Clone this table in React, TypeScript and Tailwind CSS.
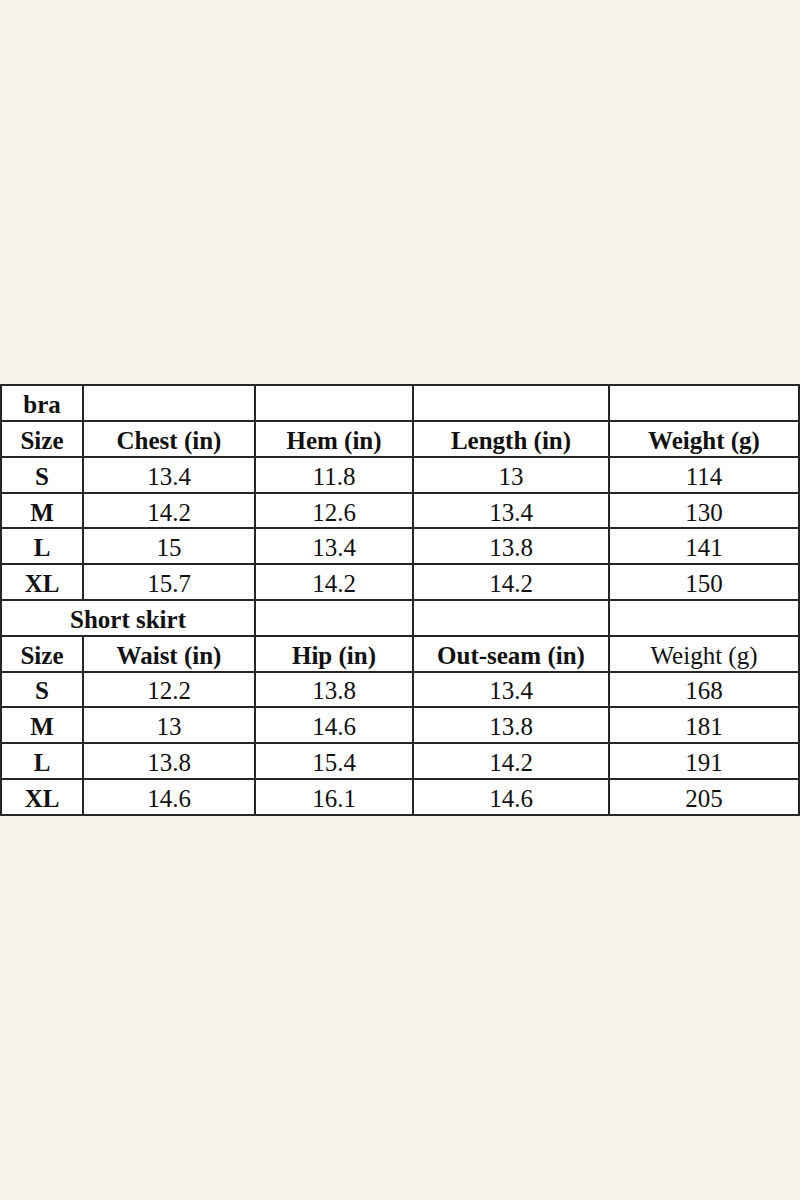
const braRows = [
  ["S", "13.4", "11.8", "13", "114"],
  ["M", "14.2", "12.6", "13.4", "130"],
  ["L", "15", "13.4", "13.8", "141"],
  ["XL", "15.7", "14.2", "14.2", "150"],
];

const skirtRows = [
  ["S", "12.2", "13.8", "13.4", "168"],
  ["M", "13", "14.6", "13.8", "181"],
  ["L", "13.8", "15.4", "14.2", "191"],
  ["XL", "14.6", "16.1", "14.6", "205"],
];

const cell = "border-2 border-[#262626] text-center align-middle px-0 pt-[3px] pb-0 leading-none";

function DataRows({ rows }: { rows: string[][] }) {
  return (
    <>
      {rows.map((r) => (
        <tr key={r[0]} className="h-[35.8px]">
          {r.map((v, i) => (
            <td key={i} className={`${cell} ${i === 0 ? "font-bold" : ""}`}>
              {v}
            </td>
          ))}
        </tr>
      ))}
    </>
  );
}

export default function App() {
  return (
    <div className="w-[800px] h-[1200px] bg-[#f5f2eb] flex items-center">
      <table
        className="w-[798px] table-fixed border-collapse bg-white text-[#111] text-[25px]"
        style={{ fontFamily: '"Liberation Serif", "Times New Roman", serif' }}
      >
        <colgroup>
          <col className="w-[82px]" />
          <col className="w-[172px]" />
          <col className="w-[158px]" />
          <col className="w-[196px]" />
          <col className="w-[190px]" />
        </colgroup>
        <tbody>
          <tr className="h-[35.8px]">
            <td className={`${cell} font-bold`}>bra</td>
            <td className={cell}></td>
            <td className={cell}></td>
            <td className={cell}></td>
            <td className={cell}></td>
          </tr>
          <tr className="h-[35.8px] font-bold">
            <td className={cell}>Size</td>
            <td className={cell}>Chest (in)</td>
            <td className={cell}>Hem (in)</td>
            <td className={cell}>Length (in)</td>
            <td className={cell}>Weight (g)</td>
          </tr>
          <DataRows rows={braRows} />
          <tr className="h-[35.8px]">
            <td className={`${cell} font-bold`} colSpan={2}>
              Short skirt
            </td>
            <td className={cell}></td>
            <td className={cell}></td>
            <td className={cell}></td>
          </tr>
          <tr className="h-[35.8px]">
            <td className={`${cell} font-bold`}>Size</td>
            <td className={`${cell} font-bold`}>Waist (in)</td>
            <td className={`${cell} font-bold`}>Hip (in)</td>
            <td className={`${cell} font-bold`}>Out-seam (in)</td>
            <td className={cell}>Weight (g)</td>
          </tr>
          <DataRows rows={skirtRows} />
        </tbody>
      </table>
    </div>
  );
}
